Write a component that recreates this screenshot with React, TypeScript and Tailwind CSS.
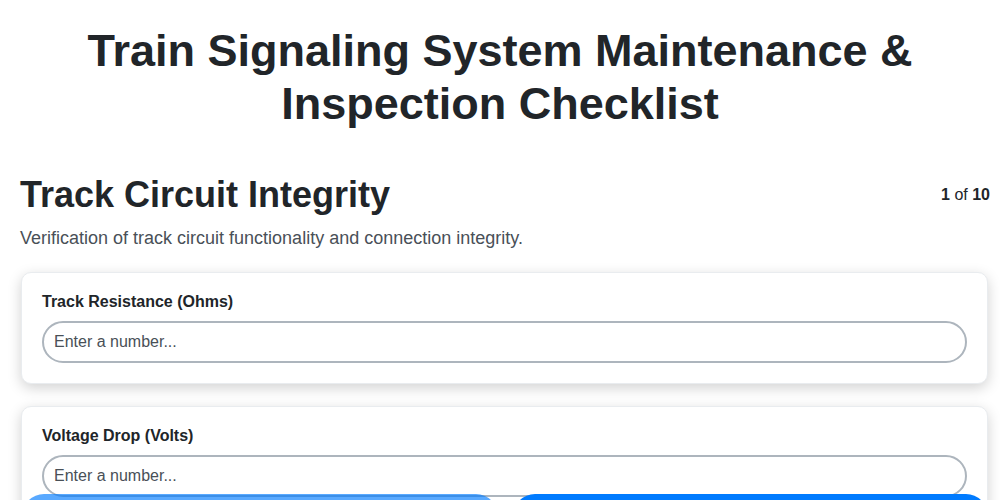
import React from "react";

function Field({ label }: { label: string }) {
  return (
    <div className="rounded-[10px] border border-[#e9ecef] bg-white px-[20px] pt-[20px] pb-[20px] shadow-[0_4px_14px_rgba(0,0,0,0.18)]">
      <label className="block text-[16px] font-bold leading-[18px] text-[#212529]">{label}</label>
      <input
        type="text"
        placeholder="Enter a number..."
        className="mt-[10px] box-border block h-[42px] w-full rounded-full border-2 border-[#adb5bd] bg-white px-[10px] text-[16px] text-[#212529] outline-none placeholder:text-[#495057]"
      />
    </div>
  );
}

export default function App() {
  return (
    <div
      className="relative min-h-[500px] bg-white text-[#212529]"
      style={{ fontFamily: '"Liberation Sans", Arial, sans-serif' }}
    >
      <h1 className="m-0 pt-[24px] text-center text-[45px] font-bold leading-[53px] text-[#212529]">
        Train Signaling System Maintenance &amp;
        <br />
        Inspection Checklist
      </h1>
      <div className="mt-[43px] flex items-center justify-between pl-[20px] pr-[10px]">
        <h2 className="m-0 text-[36px] font-bold leading-[1.2] text-[#212529]">Track Circuit Integrity</h2>
        <div className="text-[16px] text-[#212529]">
          <span className="font-bold">1</span> of <span className="font-bold">10</span>
        </div>
      </div>
      <p className="mt-[9px] pl-[20px] text-[18px] leading-[27px] text-[#495057]">
        Verification of track circuit functionality and connection integrity.
      </p>
      <div className="mt-[20px] flex flex-col gap-[22px] pl-[21px] pr-[12px] pb-[80px]">
        <Field label="Track Resistance (Ohms)" />
        <Field label="Voltage Drop (Volts)" />
      </div>
      <div className="absolute left-[22px] right-[12px] top-[494px] flex gap-[15px]">
        <button className="h-[44px] flex-1 rounded-full bg-[#007bff] text-[16px] font-bold text-white opacity-65">
          Previous
        </button>
        <button className="h-[44px] flex-1 rounded-full bg-[#007bff] text-[16px] font-bold text-white">
          Next
        </button>
      </div>
    </div>
  );
}
